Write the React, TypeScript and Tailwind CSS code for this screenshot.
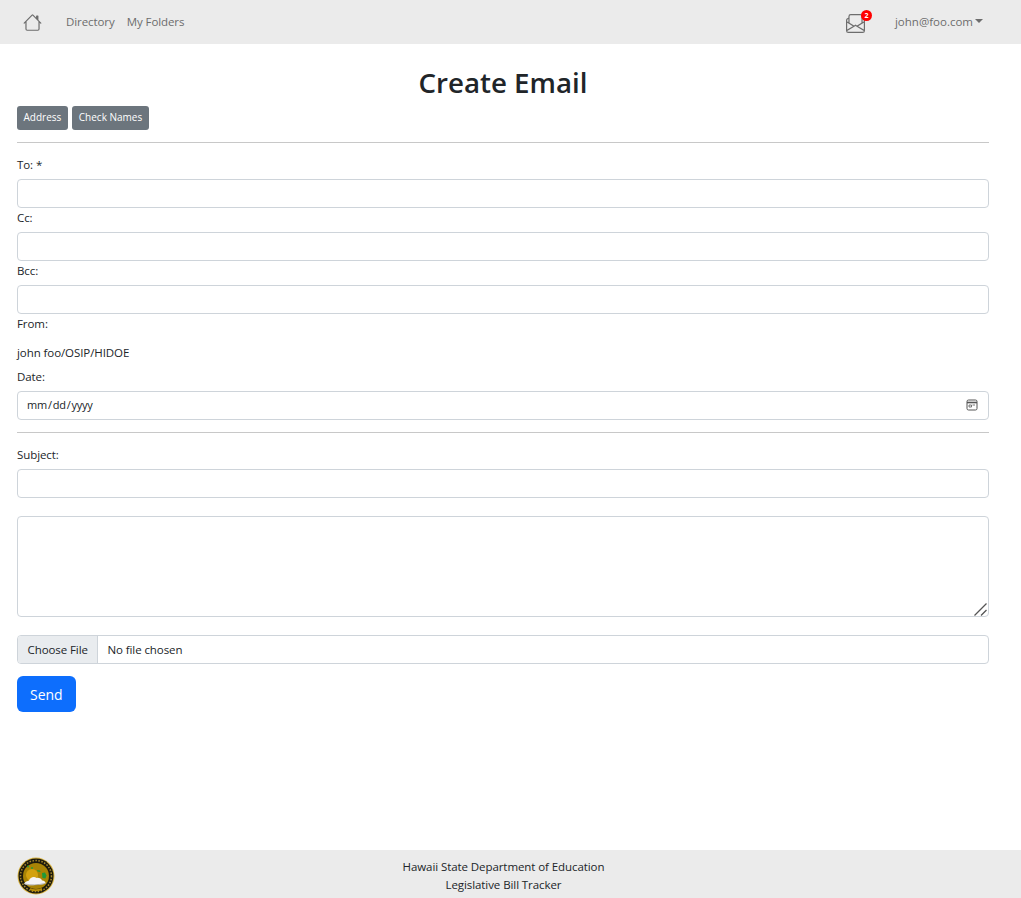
import { BsHouse, BsEnvelopePaper } from "react-icons/bs";

const font = { fontFamily: '"Open Sans", "Liberation Sans", sans-serif' };

function Seal() {
  return (
    <svg width="38" height="38" viewBox="0 0 38 38" className="shrink-0">
      <circle cx="19" cy="19" r="18.500" fill="#d9b441" />
      <circle cx="19" cy="19" r="17.500" fill="#1d1a0c" />
      <circle cx="19" cy="19" r="15.500" fill="none" stroke="#a88a2c" strokeWidth="1.500" strokeDasharray="1.500 1.500" />
      <circle cx="19" cy="19" r="13" fill="#a98405" />
      <circle cx="15" cy="18" r="6" fill="#d3a20e" />
      <circle cx="11" cy="9.500" r="1" fill="#2c9a35" />
      <circle cx="15" cy="11" r="1" fill="#2c9a35" />
      <path d="M20 13l3 .5.500 1.500-3-.5z" fill="#2c9a35" />
      <path d="M25 16l3-.5 1.500 3-1 3-3-.5z" fill="#1f9a38" />
      <path d="M7 27c1-2.500 3.500-3 5-3.500 1-3 5-4.500 7.500-2.500 2-.7 5 .5 5.500 2.500 2 0 4 1.500 3.500 3-3 1.500-7 1-10.500 1.500-3.500.5-8 .5-11-1z" fill="#f4f4f4" />
      <path d="M8 27c6 1.500 13 1 20-.5" stroke="#9a9a9a" strokeWidth=".7" fill="none" />
      <path d="M13 32c3 1.500 8 1.500 12 0" stroke="#b98d08" strokeWidth="2" fill="none" />
    </svg>
  );
}

const inputClass =
  "block h-[29px] w-full rounded-[4px] border border-[#ced4da] bg-white px-[9px] text-[11.500px] tracking-[-0.08px] text-[#212529] outline-none";

const labelClass = "block h-[24px] pt-[1px] text-[11.500px] leading-[18px] tracking-[-0.08px]";

function Field({ label }: { label: string }) {
  return (
    <div>
      <label className={labelClass}>{label}</label>
      <input type="text" className={inputClass} />
    </div>
  );
}

export default function App() {
  return (
    <div style={font} className="flex min-h-[898px] flex-col bg-white text-[#212529]">
      <nav className="flex h-[44px] items-center bg-[#ebebeb] text-[11.500px] tracking-[-0.08px] text-[#6d6d6d]">
        <a className="ml-[23px] mr-[24px]">
          <BsHouse size={19} color="#6d6d6d" />
        </a>
        <a className="mr-[12px]">Directory</a>
        <a>My Folders</a>
        <div className="ml-auto flex items-center">
          <a className="relative mr-[30px] mt-[2px]">
            <BsEnvelopePaper size={19} color="#6d6d6d" />
            <span className="absolute -right-[7px] -top-[4px] flex h-[11px] w-[11px] items-center justify-center rounded-full bg-[#ff0000] text-[7px] font-bold leading-none text-white">
              2
            </span>
          </a>
          <a className="mr-[38px] flex items-center tracking-[0px]">
            john@foo.com
            <span className="ml-[2px] mt-[-2px] border-x-[4px] border-t-[4px] border-x-transparent border-t-[#6d6d6d]" />
          </a>
        </div>
      </nav>

      <main className="flex-1 pl-[17px] pr-[32px]">
        <h1 className="mt-[18px] h-[44px] text-center text-[27.700px] font-semibold leading-[40px]">Create Email</h1>
        <div className="flex gap-[4px]">
          <button className="h-[24px] rounded-[3px] bg-[#6c757d] px-[6.500px] pb-[1px] text-[10px] text-white">Address</button>
          <button className="h-[24px] rounded-[3px] bg-[#6c757d] px-[7px] pb-[1px] text-[10px] text-white">Check Names</button>
        </div>
        <hr className="mt-[12px] mb-[12px] border-[#c8c8c8]" />
        <Field label="To: *" />
        <Field label="Cc:" />
        <Field label="Bcc:" />
        <label className="block h-[30px] pt-[1px] text-[11.500px] leading-[18px] tracking-[-0.08px]">From:</label>
        <p className="h-[23px] text-[11.500px] leading-[18px] tracking-[-0.08px]">john foo/OSIP/HIDOE</p>
        <div>
          <label className={labelClass}>Date:</label>
          <div className="relative">
            <input
              type="date"
              className="block h-[29px] w-full rounded-[4px] border border-[#ced4da] bg-white pl-[8px] pr-[9px] text-[11px] tracking-[-0.25px] text-[#212529] outline-none [&::-webkit-calendar-picker-indicator]:opacity-0"
            />
            <svg
              width="12"
              height="12"
              viewBox="0 0 12 12"
              fill="none"
              stroke="#555"
              className="pointer-events-none absolute right-[11px] top-[8px]"
            >
              <rect x="1" y="1" width="10" height="10" rx="1.500" />
              <path d="M1 3.500h10" strokeWidth="1.600" />
              <path d="M3 6h2.500v2H3zM6.500 6H9" strokeWidth=".8" />
            </svg>
          </div>
        </div>
        <hr className="mt-[12px] mb-[12px] border-[#c8c8c8]" />
        <Field label="Subject:" />
        <div className="relative mt-[18px]">
          <textarea className="block h-[101px] w-full resize-none rounded-[4px] border border-[#ced4da] bg-white outline-none" />
          <svg
            width="13"
            height="13"
            viewBox="0 0 13 13"
            fill="none"
            stroke="#555"
            strokeWidth="1.300"
            className="pointer-events-none absolute bottom-[1px] right-[2px]"
          >
            <path d="M.5 12.500 12.500.5M7 12.500l5.500-5.500" />
          </svg>
        </div>
        <input
          type="file"
          className="mt-[18px] block h-[29px] w-full rounded-[4px] border border-[#ced4da] text-[11.500px] tracking-[-0.08px] file:mr-[9px] file:h-full file:border-0 file:border-r file:border-[#ced4da] file:bg-[#e9ecef] file:px-[9.500px] file:text-[11.500px] file:tracking-[-0.08px] file:text-[#212529]"
        />
        <button className="mt-[12px] h-[36px] rounded-[6px] bg-[#0d6efd] px-[13px] text-[14px] text-white">Send</button>
      </main>

      <footer className="relative flex h-[48px] flex-col items-center justify-center bg-[#ebebeb] pt-[4px] pr-[14px] text-[11.500px] leading-[18px] tracking-[-0.08px]">
        <div className="absolute left-[17px] top-[7px]">
          <Seal />
        </div>
        <span>Hawaii State Department of Education</span>
        <span>Legislative Bill Tracker</span>
      </footer>
    </div>
  );
}
